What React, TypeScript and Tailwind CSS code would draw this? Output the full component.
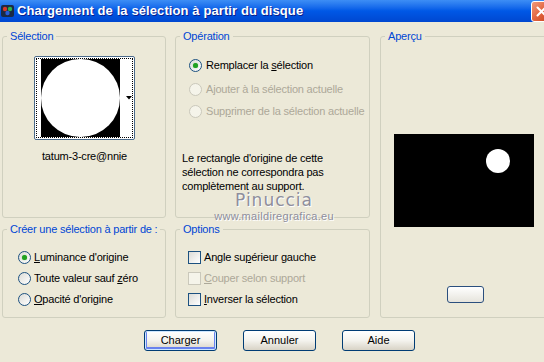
import type { ReactNode } from 'react';

function Radio({ checked, disabled }: { checked?: boolean; disabled?: boolean }) {
  return (
    <span
      className={
        disabled
          ? 'w-[13px] h-[13px] rounded-full border border-[#cac8bb] bg-[#f5f4ea] flex items-center justify-center shrink-0'
          : 'w-[13px] h-[13px] rounded-full border border-[#1c5180] bg-gradient-to-br from-[#dcdcd7] to-white flex items-center justify-center shrink-0'
      }
    >
      {checked && <span className="w-[5px] h-[5px] rounded-full bg-[#21a121] shadow-[0_0_1px_#4fc24f]" />}
    </span>
  );
}

function Check({ disabled }: { disabled?: boolean }) {
  return (
    <span
      className={
        disabled
          ? 'w-[13px] h-[13px] border border-[#cac8bb] bg-[#f5f4ea] shrink-0'
          : 'w-[13px] h-[13px] border border-[#1c5180] bg-gradient-to-br from-[#dcdcd7] to-white shrink-0'
      }
    />
  );
}

function Group({ title, className, children }: { title: string; className: string; children: ReactNode }) {
  return (
    <fieldset className={'border border-[#d0d0bf] rounded-[3px] min-w-0 ' + className}>
      <legend className="ml-[4px] px-[3px] text-[#0046d5] leading-[13px] whitespace-nowrap">{title}</legend>
      {children}
    </fieldset>
  );
}

function Button({ label, focused }: { label: string; focused?: boolean }) {
  return (
    <div
      className={
        'w-[73px] h-[21px] rounded-[3px] border border-[#003c74] bg-gradient-to-b from-white via-[#f4f3ee] to-[#d8d3c6] flex items-center justify-center text-black ' +
        (focused ? 'shadow-[inset_0_0_0_1px_#cee7ff,inset_0_-1px_0_2px_#6982ee]' : '')
      }
    >
      {label}
    </div>
  );
}

export default function App() {
  return (
    <div className="relative w-[544px] h-[362px] overflow-hidden bg-[#ece9d8] text-[11px] text-black font-['Liberation_Sans',Arial,sans-serif]">
      {/* title bar */}
      <div className="h-[22px] flex items-center bg-gradient-to-b from-[#3d8ef5] via-[#0058e6] to-[#0047d0] pl-[1px]">
        <svg width="14" height="14" viewBox="0 0 14 14" className="shrink-0">
          <rect x="0" y="1" width="13" height="12" rx="2" fill="#1b2a44" />
          <circle cx="4" cy="5" r="2.2" fill="#d83a2a" />
          <circle cx="9" cy="5" r="2.2" fill="#2fb34a" />
          <circle cx="6.5" cy="9" r="2.2" fill="#2a5fd8" />
        </svg>
        <span className="ml-[2px] text-white font-bold text-[13px] tracking-[0.1px] [text-shadow:1px_1px_0_#0a1e8c]">
          Chargement de la sélection à partir du disque
        </span>
        <div className="ml-auto mr-[-8px] w-[21px] h-[21px] rounded-[3px] border border-white bg-gradient-to-br from-[#f09a7c] via-[#e2643f] to-[#c9421c] flex items-center justify-center">
          <svg width="11" height="11" viewBox="0 0 11 11">
            <path d="M1.5 1.5 L9.5 9.5 M9.5 1.5 L1.5 9.5" stroke="white" strokeWidth="2" strokeLinecap="round" />
          </svg>
        </div>
      </div>

      {/* body */}
      <div className="flex pt-[8px] pl-[2px] tracking-[-0.2px] whitespace-nowrap">
        {/* left column */}
        <div className="flex flex-col w-[164px] shrink-0">
          <Group title="Sélection" className="h-[188px]">
            <div className="pt-[13px] pl-[31px]">
              <div className="relative w-[101px] h-[84px] border border-[#4b6a8a] rounded-[2px] bg-white">
                <div className="absolute inset-[1px] border border-dotted border-black" />
                <div className="pl-[6px] pt-[2px]">
                  <div className="w-[79px] h-[78px] bg-black">
                    <div className="w-full h-full rounded-full bg-white" />
                  </div>
                </div>
                <svg width="6" height="4" viewBox="0 0 6 4" className="absolute right-[2px] top-[39px]">
                  <path d="M0 0 H6 L3 3.5 Z" fill="black" />
                </svg>
              </div>
              <div className="w-[101px] mt-[10px] text-center leading-[13px]">tatum-3-cre@nnie</div>
            </div>
          </Group>
          <Group title="Créer une sélection à partir de :" className="h-[95px] mt-[5px]">
            <div className="pt-[15px] pl-[15px] flex flex-col gap-[8px] leading-[13px]">
              <div className="flex items-center gap-[3px] h-[13px]">
                <Radio checked />
                <span><u>L</u>uminance d'origine</span>
              </div>
              <div className="flex items-center gap-[3px] h-[13px]">
                <Radio />
                <span>Toute valeur sauf <u>z</u>éro</span>
              </div>
              <div className="flex items-center gap-[3px] h-[13px]">
                <Radio />
                <span><u>O</u>pacité d'origine</span>
              </div>
            </div>
          </Group>
        </div>

        {/* middle column */}
        <div className="flex flex-col w-[195px] ml-[9px] shrink-0">
          <Group title="Opération" className="h-[188px]">
            <div className="pt-[16px] pl-[6px] leading-[13px]">
              <div className="ml-[7px] flex items-center gap-[4px] h-[13px]">
                <Radio checked />
                <span>Remplacer la <u>s</u>élection</span>
              </div>
              <div className="ml-[7px] mt-[11px] flex items-center gap-[4px] h-[13px] text-[#aca899]">
                <Radio disabled />
                <span>Ajouter à la sélection actuelle</span>
              </div>
              <div className="ml-[7px] mt-[9px] flex items-center gap-[4px] h-[13px] text-[#aca899]">
                <Radio disabled />
                <span>Sup<u>p</u>rimer de la sélection actuelle</span>
              </div>
              <p className="mt-[33px] leading-[14px]">
                Le rectangle d'origine de cette
                <br />
                sélection ne correspondra pas
                <br />
                complètement au support.
              </p>
            </div>
          </Group>
          <Group title="Options" className="h-[95px] mt-[5px]">
            <div className="pt-[15px] pl-[12px] flex flex-col gap-[8px] leading-[13px]">
              <div className="flex items-center gap-[3px] h-[13px]">
                <Check />
                <span>Angle su<u>p</u>érieur gauche</span>
              </div>
              <div className="flex items-center gap-[3px] h-[13px] text-[#aca899]">
                <Check disabled />
                <span><u>C</u>ouper selon support</span>
              </div>
              <div className="flex items-center gap-[3px] h-[13px]">
                <Check />
                <span><u>I</u>nverser la sélection</span>
              </div>
            </div>
          </Group>
        </div>

        {/* right column */}
        <Group title="Aperçu" className="w-[170px] h-[288px] ml-[10px] shrink-0">
          <div className="ml-[13px] mt-[91px] w-[140px] h-[93px] bg-black pl-[92px] pt-[15px]">
            <div className="w-[24px] h-[24px] rounded-full bg-white" />
          </div>
          <div className="ml-[66px] mt-[59px] w-[37px] h-[17px] rounded-[3px] border border-[#2b4f7e] bg-gradient-to-b from-white to-[#e6e4dc]" />
        </Group>
      </div>

      {/* bottom buttons */}
      <div className="flex pl-[144px] gap-[26px] mt-[12px]">
        <Button label="Charger" focused />
        <Button label="Annuler" />
        <Button label="Aide" />
      </div>

      {/* watermark */}
      <div className="absolute left-[210px] top-[191px] w-[128px] flex flex-col items-center pointer-events-none text-[#8e8e9c] [text-shadow:1px_1px_0_#ffffff]">
        <span className="text-[17px] leading-[19px] tracking-[1px] font-['DejaVu_Sans',sans-serif]">Pinuccia</span>
        <span className="text-[11px] leading-[12px] tracking-[0.3px]">www.maildiregrafica.eu</span>
      </div>
    </div>
  );
}
